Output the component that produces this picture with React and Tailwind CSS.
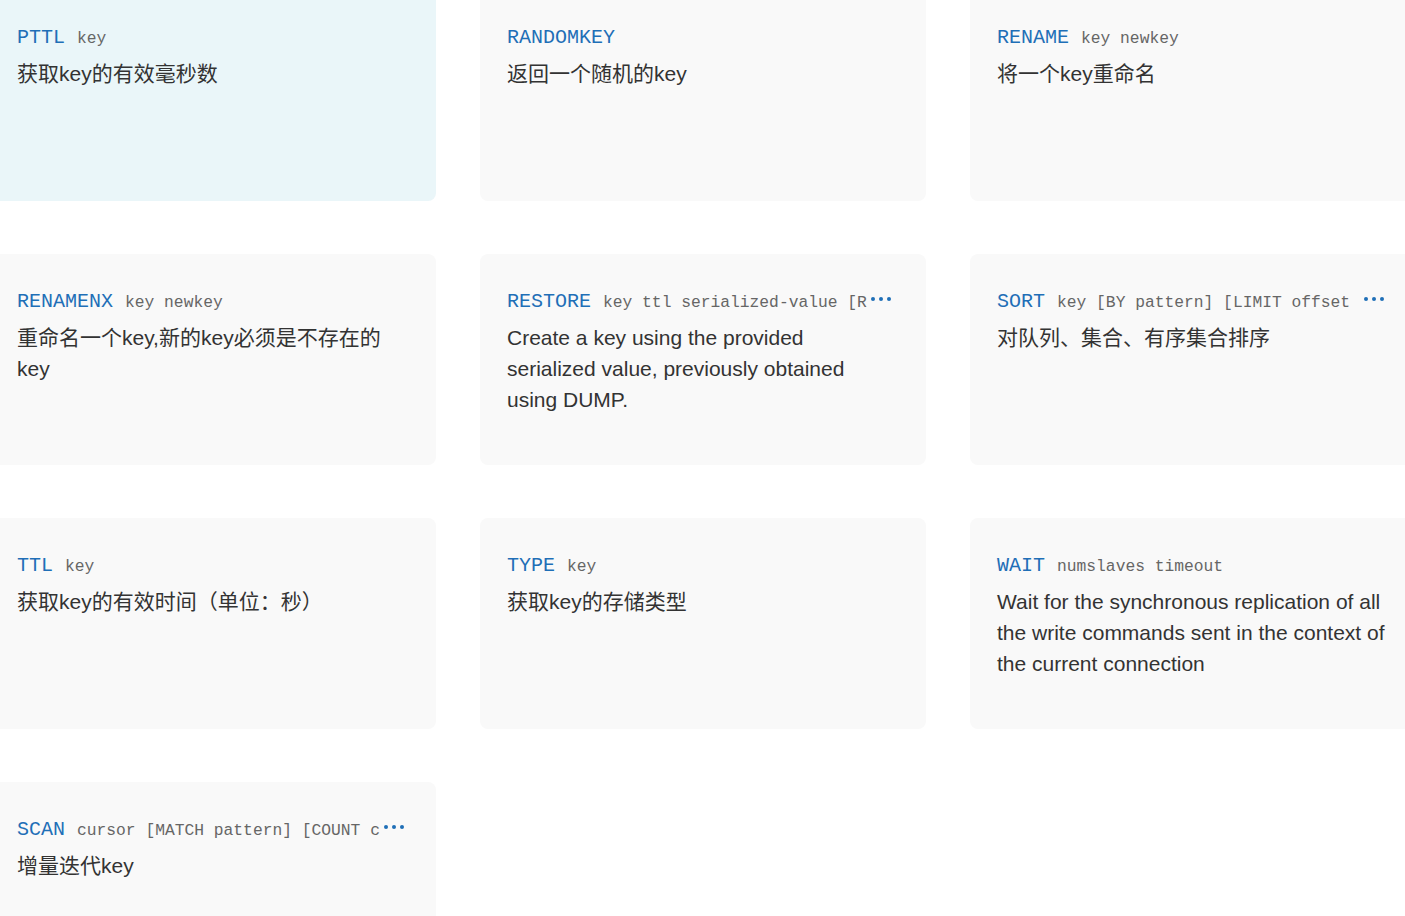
import React from "react";

const items = [
  { cmd: "PTTL", args: "key", desc: "获取key的有效毫秒数", active: true },
  { cmd: "RANDOMKEY", args: "", desc: "返回一个随机的key" },
  { cmd: "RENAME", args: "key newkey", desc: "将一个key重命名" },
  { cmd: "RENAMENX", args: "key newkey", desc: "重命名一个key,新的key必须是不存在的key" },
  { cmd: "RESTORE", args: "key ttl serialized-value [R", more: true, desc: "Create a key using the provided serialized value, previously obtained using DUMP." },
  { cmd: "SORT", args: "key [BY pattern] [LIMIT offset ", more: true, desc: "对队列、集合、有序集合排序" },
  { cmd: "TTL", args: "key", desc: "获取key的有效时间（单位：秒）" },
  { cmd: "TYPE", args: "key", desc: "获取key的存储类型" },
  { cmd: "WAIT", args: "numslaves timeout", desc: "Wait for the synchronous replication of all the write commands sent in the context of the current connection" },
  { cmd: "SCAN", args: "cursor [MATCH pattern] [COUNT c", more: true, desc: "增量迭代key" },
];

function Dots() {
  return (
    <span className="inline-flex items-center gap-[4px] ml-[4px] align-middle -translate-y-[3px]">
      <span className="w-[4px] h-[4px] rounded-full bg-[#1f6fb7]" />
      <span className="w-[4px] h-[4px] rounded-full bg-[#1f6fb7]" />
      <span className="w-[4px] h-[4px] rounded-full bg-[#1f6fb7]" />
    </span>
  );
}

export default function App() {
  return (
    <div className="w-[1405px] h-[916px] overflow-hidden bg-white">
      <div className="-mt-[10px] -ml-[10px] grid grid-cols-[446px_446px_446px] gap-x-[44px] gap-y-[53px]">
        {items.map((it) => (
          <div
            key={it.cmd}
            className={`h-[211px] rounded-lg pt-[30px] pl-[27px] pr-[29px] pb-[20px] ${it.active ? "bg-[#eaf6f9]" : "bg-[#f9f9f9]"}`}
          >
            <div
              className="h-[36px] leading-[36px] whitespace-pre text-[#1f6fb7] text-[20px]"
              style={{ fontFamily: '"Liberation Mono", monospace' }}
            >
              {it.cmd}
              {it.args && (
                <span className="ml-[12px] text-[16.3px] text-[#666666]">{it.args}</span>
              )}
              {it.more && <Dots />}
            </div>
            <div
              className="mt-[2px] text-[21px] leading-[31px] text-[#333333]"
              style={{ fontFamily: '"Liberation Sans", "Noto Sans CJK SC", sans-serif' }}
            >
              {it.desc}
            </div>
          </div>
        ))}
      </div>
    </div>
  );
}
